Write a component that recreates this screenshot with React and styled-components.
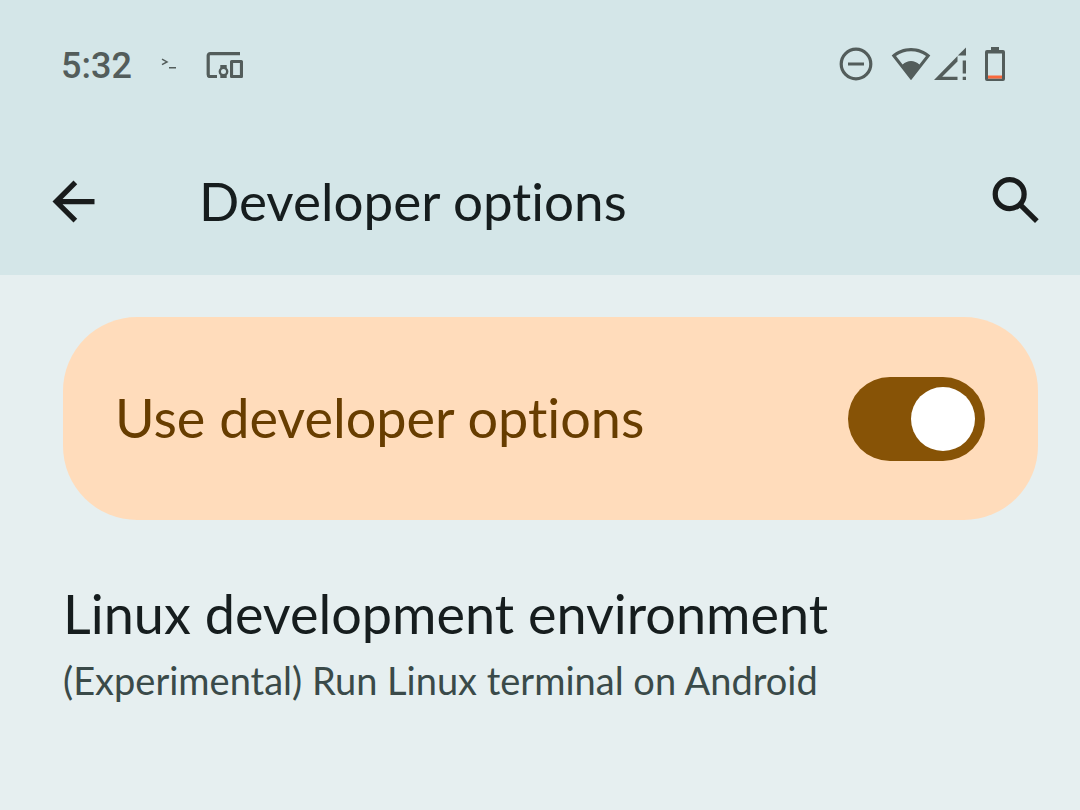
import React, { useState } from "react";
import styled, { createGlobalStyle } from "styled-components";

const GlobalStyle = createGlobalStyle`
  *, *::before, *::after { box-sizing: border-box; }
  body {
    margin: 0;
    background: #e6eff0;
    color: #161d1e;
    font-family: Lato, Roboto, sans-serif;
    font-variant-ligatures: none;
  }
`;

const Screen = styled.div`
  display: flex;
  flex-direction: column;
  min-height: 100vh;
`;

const Header = styled.header`
  background: #d4e6e8;
`;

const StatusBar = styled.div`
  display: flex;
  align-items: center;
  justify-content: space-between;
  height: 128px;
  padding: 0 75px 0 61px;
  color: #535d5b;
`;

const StatusGroup = styled.div`
  display: flex;
  align-items: center;
  gap: ${(p) => p.$gap}px;
`;

const Clock = styled.time`
  padding-top: 3px;
  font-family: Roboto, sans-serif;
  font-size: 36px;
  font-weight: 500;
  line-height: 44px;
`;

const Icon = styled.svg`
  display: block;
  flex: none;
  fill: currentColor;
`;

const AppBar = styled.div`
  display: flex;
  align-items: center;
  height: 147px;
  padding: 0 32px 0 42px;
`;

const IconButton = styled.button`
  flex: none;
  padding: 0;
  border: 0;
  background: none;
  color: #191c1c;
  cursor: pointer;
`;

const AppTitle = styled.h1`
  flex: 1;
  margin: 0;
  padding: 0 0 2px 94px;
  font-size: 53px;
  font-weight: 400;
  line-height: 64px;
`;

const Content = styled.main`
  display: flex;
  flex-direction: column;
  gap: 62px;
  padding: 42px 42px 60px 63px;
`;

const SwitchCard = styled.label`
  display: flex;
  align-items: center;
  justify-content: space-between;
  min-height: 203px;
  padding: 0 53px 0 52px;
  border-radius: 74px;
  background: #ffdcbb;
  color: #673d00;
  cursor: pointer;
`;

const CardLabel = styled.span`
  padding-bottom: 2px;
  font-size: 54px;
  line-height: 64px;
`;

const Switch = styled.input`
  appearance: none;
  flex: none;
  display: flex;
  align-items: center;
  justify-content: ${(p) => (p.checked ? "flex-end" : "flex-start")};
  width: 137px;
  height: 84px;
  margin: 0;
  padding: 0 10px;
  border-radius: 42px;
  background: ${(p) => (p.checked ? "#875306" : "#b9a58f")};
  cursor: pointer;

  &::before {
    content: "";
    width: 64px;
    height: 64px;
    border-radius: 50%;
    background: #fff;
  }
`;

const Preference = styled.a`
  display: block;
  color: inherit;
  text-decoration: none;
`;

const PreferenceTitle = styled.h2`
  margin: 0;
  font-size: 54px;
  font-weight: 400;
  line-height: 64px;
`;

const PreferenceSummary = styled.p`
  margin: 11px 0 0;
  color: #3a4a49;
  font-size: 38px;
  line-height: 46px;
`;

const TerminalIcon = () => (
  <Icon width="16" height="12" viewBox="0 0 16 12" role="img" aria-label="Terminal">
    <path d="M1 1.2 6 3.9 1 6.6" fill="none" stroke="currentColor" strokeWidth="1.5" />
    <path d="M8 9h7v1.5H8z" />
  </Icon>
);

const DevicesIcon = () => (
  <Icon width="38" height="28" viewBox="0 0 38 26" role="img" aria-label="Connected devices">
    <path d="M34 2.6H4.2a2 2 0 0 0-2 2v19a2 2 0 0 0 2 2H11" fill="none" stroke="currentColor" strokeWidth="3.2" />
    <path d="M25.6 8.9h9.8q1.6 0 1.6 1.6v15.1q0 1.6-1.6 1.6h-9.8q-1.6 0-1.6-1.6V10.5q0-1.6 1.6-1.6zM27.1 12v12h6.800V12z" fillRule="evenodd" />
    <path d="M14.3 14.1h6.4v3.5h-6.4zM14.3 23.6h6.4v3.6h-6.4z" />
    <circle cx="17.5" cy="20.6" r="3.7" fill="none" stroke="currentColor" strokeWidth="2.4" />
  </Icon>
);

const DoNotDisturbIcon = () => (
  <Icon width="34" height="34" viewBox="0 0 34 34" role="img" aria-label="Do not disturb">
    <circle cx="17" cy="17" r="14.8" fill="none" stroke="currentColor" strokeWidth="3.2" />
    <path d="M9 15.5h16v3H9z" />
  </Icon>
);

const WifiIcon = () => (
  <Icon width="40" height="34" viewBox="0 0 40 34" role="img" aria-label="Wi-Fi">
    <path
      d="M20 1C12.8 1 5.9 3.7.7 8.6L20 33.3 39.3 8.6C34.1 3.7 27.2 1 20 1zM20 4.200c5.500 0 10.700 1.700 15 4.900l-6.600 8.500C26 15.300 23 14.100 20 14.100s-6 1.200-8.400 3.500L5 9.100C9.300 5.900 14.500 4.200 20 4.200z"
      fillRule="evenodd"
    />
  </Icon>
);

const SignalIcon = () => (
  <Icon width="34" height="34" viewBox="0 0 34 34" role="img" aria-label="Mobile signal, no internet">
    <path d="M33 .5V8.600H24.800z" />
    <path d="M24.500 9v5.500L9.200 29.700H24.500V33H1z" />
    <path d="M29.700 13.500H33v13h-3.300zM29.700 29.700H33V33h-3.300z" />
  </Icon>
);

const BatteryIcon = () => (
  <Icon width="20" height="34" viewBox="0 0 20 34" role="img" aria-label="Battery low">
    <path
      d="M6 0h8v3h4q2 0 2 2v27q0 2-2 2H2q-2 0-2-2V5q0-2 2-2h4zM3 6.500v25h14v-25z"
      fillRule="evenodd"
    />
    <path d="M3 28.500h14v3H3z" fill="#f8693c" />
  </Icon>
);

const BackIcon = () => (
  <Icon width="63" height="63" viewBox="0 0 24 24" aria-hidden="true">
    <path d="M20 11H7.830l5.590-5.590L12 4l-8 8 8 8 1.410-1.410L7.830 13H20v-2z" />
  </Icon>
);

const SearchIcon = () => (
  <Icon width="63" height="63" viewBox="0 0 24 24" aria-hidden="true">
    <g fill="none" stroke="currentColor" strokeWidth="2">
      <circle cx="9.4" cy="9.2" r="5.5" />
      <path d="M13.2 13 19.750 19.500" />
    </g>
  </Icon>
);

export default function App() {
  const [enabled, setEnabled] = useState(true);

  return (
    <Screen>
      <GlobalStyle />
      <Header>
        <StatusBar>
          <StatusGroup $gap={29}>
            <Clock>5:32</Clock>
            <TerminalIcon />
            <DevicesIcon />
          </StatusGroup>
          <StatusGroup $gap={18}>
            <DoNotDisturbIcon />
            <StatusGroup $gap={2}>
              <WifiIcon />
              <SignalIcon />
            </StatusGroup>
            <BatteryIcon />
          </StatusGroup>
        </StatusBar>
        <AppBar>
          <IconButton type="button" aria-label="Navigate up">
            <BackIcon />
          </IconButton>
          <AppTitle>Developer options</AppTitle>
          <IconButton type="button" aria-label="Search">
            <SearchIcon />
          </IconButton>
        </AppBar>
      </Header>
      <Content>
        <SwitchCard>
          <CardLabel>Use developer options</CardLabel>
          <Switch
            type="checkbox"
            role="switch"
            checked={enabled}
            onChange={(e) => setEnabled(e.target.checked)}
          />
        </SwitchCard>
        <Preference href="#linux">
          <PreferenceTitle>Linux development environment</PreferenceTitle>
          <PreferenceSummary>(Experimental) Run Linux terminal on Android</PreferenceSummary>
        </Preference>
      </Content>
    </Screen>
  );
}
